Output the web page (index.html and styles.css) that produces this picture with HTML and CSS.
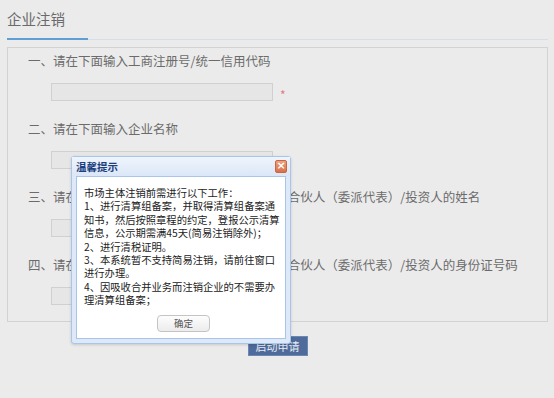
FILE: index.html
```html
<!DOCTYPE html>
<html lang="zh-CN">
<head>
    <meta charset="UTF-8">
    <title>企业注销</title>
    <link rel="stylesheet" href="styles.css">
</head>
<body>
    <div class="page">
        <div class="page-head">
            <h1>企业注销</h1>
        </div>
        <div class="panel">
            <div class="row">
                <p class="row-label">一、请在下面输入工商注册号/统一信用代码</p>
                <div class="row-field">
                    <input type="text" class="field">
                    <span class="req">*</span>
                </div>
            </div>
            <div class="row">
                <p class="row-label">二、请在下面输入企业名称</p>
                <div class="row-field"><input type="text" class="field"></div>
            </div>
            <div class="row">
                <p class="row-label">三、请在下面输入法定代表人/负责人/执行事务合伙人（委派代表）/投资人的姓名</p>
                <div class="row-field"><input type="text" class="field"></div>
            </div>
            <div class="row">
                <p class="row-label">四、请在下面输入法定代表人/负责人/执行事务合伙人（委派代表）/投资人的身份证号码</p>
                <div class="row-field"><input type="text" class="field"></div>
            </div>
        </div>
        <div class="actions">
            <button class="btn-start">启动申请</button>
        </div>
    </div>

    <div class="dialog">
        <div class="dialog-title">
            <span>温馨提示</span>
            <span class="dialog-close">&#215;</span>
        </div>
        <div class="dialog-body">
            <p>市场主体注销前需进行以下工作：<br>
            1、进行清算组备案，并取得清算组备案通知书，然后按照章程的约定，登报公示清算信息，公示期需满45天(简易注销除外)；<br>
            2、进行清税证明。<br>
            3、本系统暂不支持简易注销，请前往窗口进行办理。<br>
            4、因吸收合并业务而注销企业的不需要办理清算组备案；</p>
            <div class="dialog-foot">
                <button class="btn-ok">确定</button>
            </div>
        </div>
    </div>
</body>
</html>
```

FILE: styles.css
```css
body {
    margin: 0;
    background: #ebebeb;
    font-family: "Noto Sans CJK SC", "Liberation Sans", sans-serif;
    color: #666;
}
.page {
    padding: 0 6px 0 7px;
}
.page-head {
    display: flex;
    border-bottom: 1px solid #d3e0ec;
}
.page-head h1 {
    margin: 0 0 -1px;
    padding: 9px 0 9px;
    width: 81px;
    font-size: 14.5px;
    font-weight: normal;
    line-height: 20px;
    color: #6a6a6a;
    border-bottom: 2px solid #5d9fd6;
}
.panel {
    margin-top: 7px;
    border: 1px solid #d2d2d2;
    padding: 5px 0 16px 20px;
    display: flex;
    flex-direction: column;
    gap: 20px;
}
.row-label {
    margin: 0;
    font-size: 12.5px;
    line-height: 16px;
    color: #6b6b6b;
    white-space: nowrap;
}
.row-field {
    display: flex;
    align-items: center;
    margin: 14px 0 0 23px;
}
.field {
    width: 222px;
    height: 18px;
    box-sizing: border-box;
    border: 1px solid #d0d0d0;
    background: #e6e6e6;
    padding: 0;
    margin: 0;
}
.req {
    color: #e07b7b;
    font-size: 12px;
    margin-left: 7px;
    position: relative;
    top: 2px;
}
.actions {
    display: flex;
    justify-content: center;
    margin-top: 14px;
}
.btn-start {
    width: 60px;
    height: 20px;
    border: 1px solid #6d87b3;
    background: #4f6b9b;
    color: #e8ecf3;
    font-family: inherit;
    font-size: 11px;
    padding: 0;
}

.dialog {
    position: absolute;
    left: 71px;
    top: 156px;
    width: 220px;
    height: 188px;
    box-sizing: border-box;
    border: 1px solid #a9c6ea;
    border-radius: 3px;
    background: #dde9f8;
    padding: 0 4px 4px;
    display: flex;
    flex-direction: column;
    box-shadow: 0 1px 3px rgba(0, 0, 0, 0.15);
}
.dialog-title {
    height: 19px;
    display: flex;
    align-items: center;
    justify-content: space-between;
    font-size: 10.5px;
    font-weight: bold;
    color: #1c3e7e;
    background: linear-gradient(#eef4fc, #dbe7f7);
    margin: 0 -4px;
    padding: 0 3px 0 4px;
}
.dialog-close {
    width: 12px;
    height: 13px;
    border-radius: 2px;
    background: linear-gradient(#eda37d, #d9714a);
    border: 1px solid #c9663f;
    box-sizing: border-box;
    color: #fff;
    font-size: 11px;
    line-height: 10px;
    text-align: center;
    font-family: "DejaVu Sans", sans-serif;
}
.dialog-body {
    flex: 1;
    background: #fff;
    border: 1px solid #a8c4e8;
    padding: 9px 2px 0 7px;
}
.dialog-body p {
    margin: 0;
    font-size: 10.3px;
    line-height: 13.4px;
    color: #222;
}
.dialog-foot {
    display: flex;
    justify-content: center;
    margin-top: 8px;
}
.btn-ok {
    width: 53px;
    height: 17px;
    border: 1px solid #c4c4c4;
    border-radius: 4px;
    background: linear-gradient(#fdfdfd, #ececec);
    color: #555;
    font-family: inherit;
    font-size: 9.5px;
    padding: 0;
}
```
